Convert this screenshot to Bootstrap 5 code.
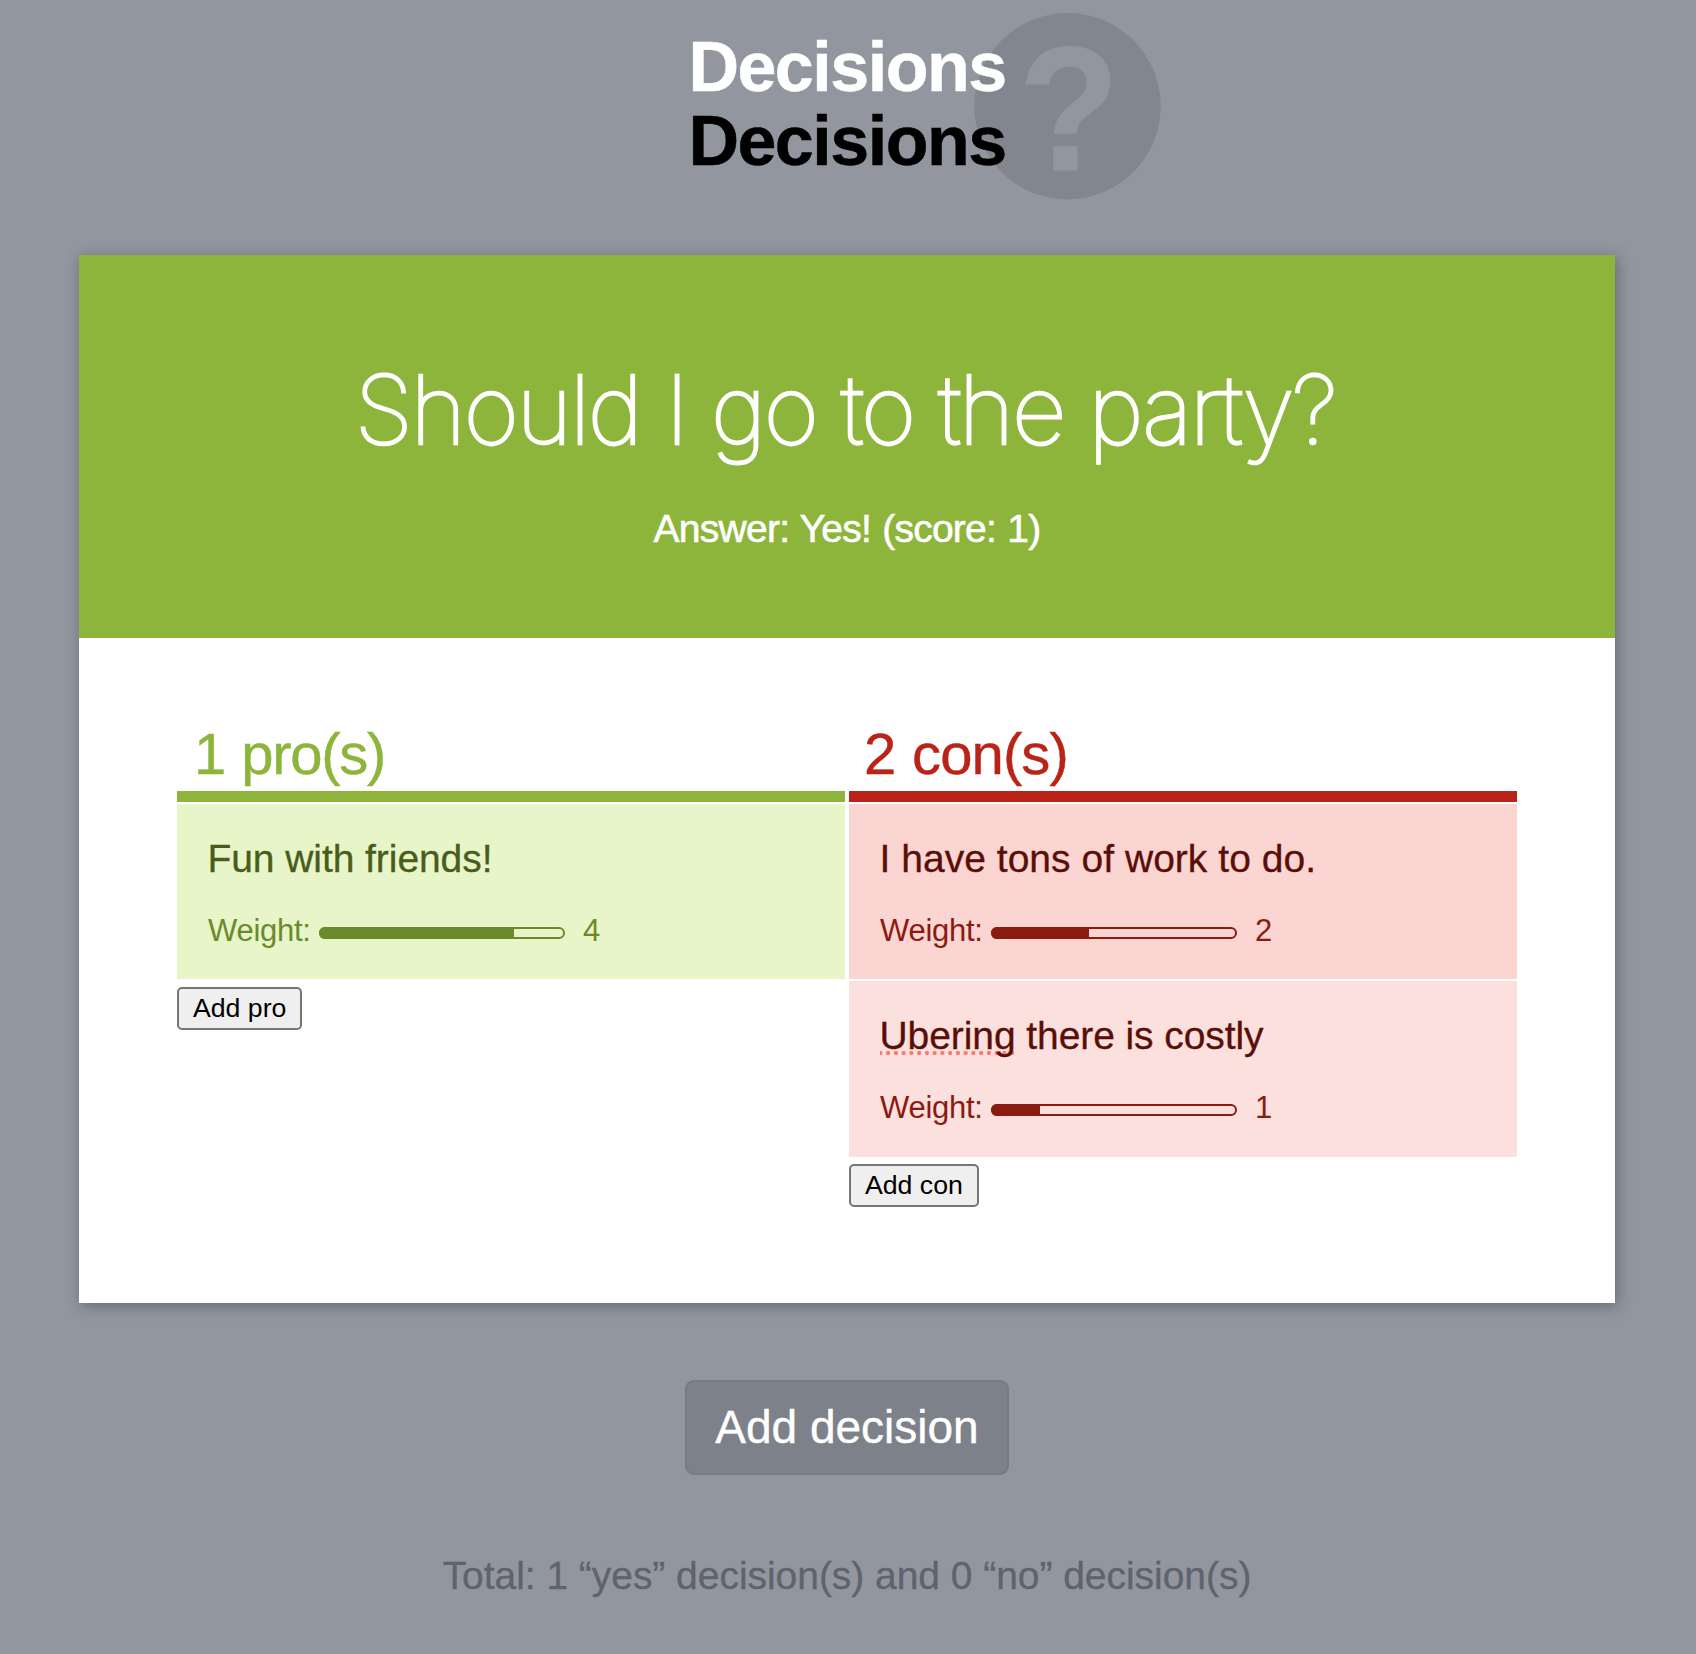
<!DOCTYPE html>
<html lang="en">
<head>
<meta charset="utf-8">
<title>Decisions</title>
<meta name="viewport" content="width=device-width, initial-scale=1">
<link rel="stylesheet" href="https://cdn.jsdelivr.net/npm/bootstrap@5.3.0/dist/css/bootstrap.min.css">
<style>
  body { background: #92969f; font-family: "Liberation Sans", Arial, sans-serif; padding-right: 2px; min-height: 1654px; }
  .masthead { height: 255px; padding-top: 30px; }
  .masthead h1 { font-size: 70px; line-height: 74px; letter-spacing: -1.5px; -webkit-text-stroke: .5px; }
  .qmark { left: 974px; top: 13px; width: 187px; height: 187px; }
  .qmark circle { fill: #82868e; }
  .qmark text { fill: #92969f; stroke: #92969f; stroke-width: 1px; font: bold 177px "Liberation Sans", Arial, sans-serif; }
  .decision { width: 1536px; height: 1048px; box-shadow: 2px 3px 14px rgba(20, 28, 45, .36); }
  .verdict { height: 383px; background: #8db53b; padding-top: 100px; }
  .question { font-family: Inter, "Liberation Sans", sans-serif; font-weight: 100; font-size: 95px; line-height: 110px; letter-spacing: -2.3px; -webkit-text-stroke: 2.6px #fff; margin: 0 4px 41px 0; }
  .answer { font-size: 39px; line-height: 46px; letter-spacing: -.75px; word-spacing: 1px; -webkit-text-stroke: .6px #fff; }
  .sides { padding: 80px 98px 0; gap: 4px; }
  .side { width: 668px; }
  .side h3 { font-size: 58px; line-height: 72px; height: 84px; border-bottom: 11px solid; font-weight: 400; padding-left: 17px; letter-spacing: -1.3px; word-spacing: 1.5px; -webkit-text-stroke: .4px; }
  .side.con h3 { padding-left: 15px; letter-spacing: -.9px; }
  .pro { --main: #8db53b; --ink: #495d1b; --tone: #6a8a2c; }
  .con { --main: #ba2418; --ink: #5a0e08; --tone: #8b1a10; }
  .side h3 { color: var(--main); border-color: var(--main); }
  .reason { height: 175px; margin-top: 2px; padding: 32px 31px 0 30.5px; color: var(--ink); }
  .reason p { font-size: 39px; line-height: 46px; letter-spacing: -.07px; margin-bottom: 31px; -webkit-text-stroke: .3px; }
  .con .reason p { letter-spacing: .03px; }
  .pro .reason { background: #e8f5c9; }
  .con .reason { background: #fbd5d2; }
  .con .reason.faint { background: #fbe0dd; height: 176px; }
  .con .reason.faint p { letter-spacing: -.08px; }
  .weight { color: var(--tone); font-size: 31px; line-height: 36px; padding-left: .5px; }
  .weight .caption { letter-spacing: -.28px; width: 111px; }
  .meter-bar { width: 246px; height: 12px; margin-top: 3px; margin-right: 18px; border: 2px solid var(--tone); border-radius: 6px; background: transparent; overflow: visible; }
  .meter-bar .progress-bar { background: var(--tone); margin: -2px 0 -2px -2px; border-radius: 6px 0 0 6px; padding-right: 1px; box-sizing: content-box; }
  .misspelt { background: radial-gradient(circle at 3.9px 2px, #f77a70 1.9px, transparent 2.3px) -3.5px 37px / 7.75px 4px repeat-x; }
  .btn-plain { background: #efefef; border: 2px solid #767676; border-radius: 5px; color: #000; font-size: 26.67px; line-height: 36px; height: 43px; padding: 0 14px 2px; margin-top: 8px; }
  .con .btn-plain { margin-top: 7px; }
  .btn-decision { width: 324px; height: 95px; margin-top: 77px; background: #7d8189; border: 2px solid #767a82; border-radius: 9px; color: #fff; font-size: 46px; line-height: 91px; padding: 0; -webkit-text-stroke: .4px; }
  .totals { margin: 78px 0 0; font-size: 39px; line-height: 46px; letter-spacing: -.04px; color: #5f636c; -webkit-text-stroke: .3px; }
</style>
</head>
<body>
<header class="masthead position-relative text-center">
  <svg class="qmark position-absolute" viewBox="0 0 187 187" aria-hidden="true">
    <circle cx="93.5" cy="93.2" r="93.2"/>
    <text transform="translate(44.6 157) scale(.934 1)">?</text>
  </svg>
  <h1 class="position-relative fw-bold m-0 text-white">Decisions</h1>
  <h1 class="position-relative fw-bold m-0 text-black">Decisions</h1>
</header>

<main class="decision mx-auto bg-white">
  <section class="verdict text-center text-white">
    <h2 class="question">Should I go to the party?</h2>
    <p class="answer m-0">Answer: Yes! (score: 1)</p>
  </section>
  <div class="sides d-flex align-items-start">
    <section class="side pro">
      <h3 class="m-0">1 pro(s)</h3>
      <div class="reason">
        <p>Fun with friends!</p>
        <div class="weight d-flex align-items-center">
          <span class="caption">Weight:</span>
          <div class="progress meter-bar"><div class="progress-bar" style="width:80%"></div></div>
          <span>4</span>
        </div>
      </div>
      <button class="btn btn-plain" type="button">Add pro</button>
    </section>
    <section class="side con">
      <h3 class="m-0">2 con(s)</h3>
      <div class="reason">
        <p>I have tons of work to do.</p>
        <div class="weight d-flex align-items-center">
          <span class="caption">Weight:</span>
          <div class="progress meter-bar"><div class="progress-bar" style="width:40%"></div></div>
          <span>2</span>
        </div>
      </div>
      <div class="reason faint">
        <p><span class="misspelt">Ubering</span> there is costly</p>
        <div class="weight d-flex align-items-center">
          <span class="caption">Weight:</span>
          <div class="progress meter-bar"><div class="progress-bar" style="width:20%"></div></div>
          <span>1</span>
        </div>
      </div>
      <button class="btn btn-plain" type="button">Add con</button>
    </section>
  </div>
</main>

<footer class="text-center">
  <button class="btn btn-decision" type="button">Add decision</button>
  <p class="totals">Total: 1 “yes” decision(s) and 0 “no” decision(s)</p>
</footer>
<script src="https://cdn.jsdelivr.net/npm/bootstrap@5.3.0/dist/js/bootstrap.bundle.min.js"></script>
</body>
</html>
